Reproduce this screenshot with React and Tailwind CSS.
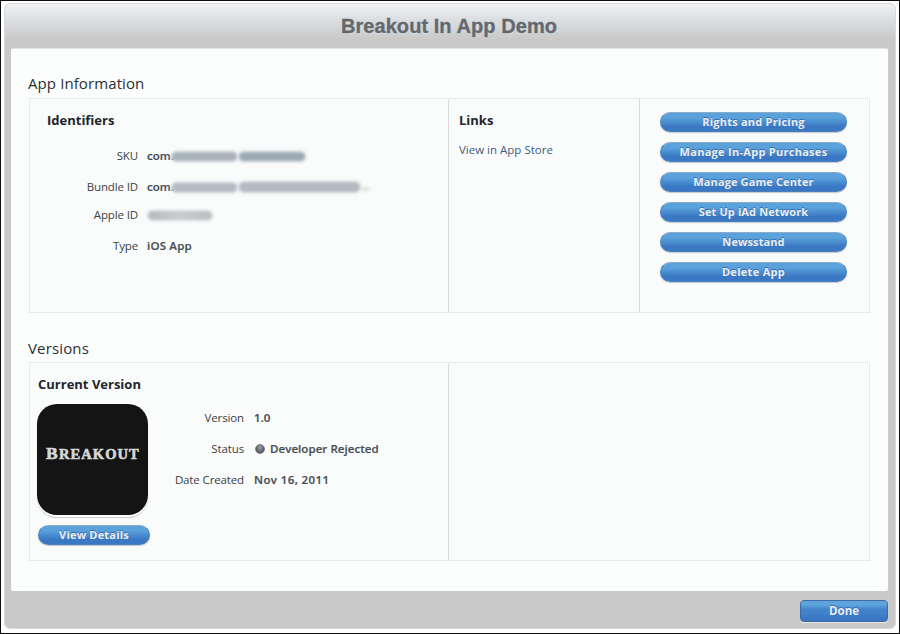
const actions = [
  ["Rights and Pricing", "tracking-[0.22px]"],
  ["Manage In-App Purchases", "tracking-[0.28px]"],
  ["Manage Game Center", "tracking-[0.12px]"],
  ["Set Up iAd Network", "tracking-[0.12px]"],
  ["Newsstand", "tracking-[0.1px]"],
  ["Delete App", "tracking-[0.3px]"],
];

function PillButton({ children, className = "" }) {
  return (
    <button
      className={`flex h-5 items-center justify-center rounded-full border border-[#4a7fbd] border-t-[#8cabc9] bg-linear-to-b from-[#5ba2dc] from-25% to-[#3a78c3] to-75% pb-px text-[11px] leading-none font-bold whitespace-nowrap text-[#e9edf1] shadow-[0_1px_1px_#c4c8cc] [text-shadow:0_-1px_0_#3a70ae] ${className}`}
    >
      {children}
    </button>
  );
}

function Smudge({ className = "" }) {
  return <span className={`block rounded-full blur-[1.5px] ${className}`} />;
}

function Field({ label, labelWidth, className = "", children }) {
  return (
    <div className={`flex items-center text-[11.5px] leading-none ${className}`}>
      <dt className={`text-right tracking-[-0.13px] whitespace-nowrap text-[#3a3f45] ${labelWidth}`}>{label}</dt>
      <dd className="flex items-center font-semibold tracking-[0.06px] whitespace-nowrap text-[#484e54] [-webkit-text-stroke:0.2px_#484e54]">{children}</dd>
    </div>
  );
}

export default function App() {
  return (
    <div className="h-[634px] w-[900px] border border-[#0c0c0c] bg-white pt-[2px] pl-[3px] font-['Open_Sans','Noto_Sans',sans-serif]">
      <div className="flex h-[626px] w-[892px] flex-col rounded-[6px] border border-[#d8d9dc] bg-[#c9c9c9] px-1.5">
        <header className="-mx-1.5 flex h-11 items-center justify-center rounded-t-[5px] bg-linear-to-b from-[#f0f2f4] via-[#dcdfe2] via-35% to-[#c9c9c9] to-80%">
          <h1 className="pr-0.5 font-['Liberation_Sans',Arial,sans-serif] text-[20px] leading-none font-bold tracking-[0.06px] text-[#62686d] [-webkit-text-stroke:0.3px_#62686d] [text-shadow:0_1px_0_#e4e7ea]">
            Breakout In App Demo
          </h1>
        </header>

        <main className="h-[543px] w-[877px] rounded-[2px] border-t border-[#e4e6e9] bg-[#fcfefe] pl-[18px]">
          <h2 className="-ml-px flex h-[49px] items-end pb-[6px] text-[15px] leading-[18px] tracking-[0.1px] text-[#2b2f34]">App Information</h2>
          <section className="flex h-[215px] w-[841px] border border-dotted border-[#d6d9dc] bg-[#fafcfc]">
            <div className="w-[419px] border-r border-[#dadcdf] pt-3">
              <h3 className="pl-[17px] text-[13px] leading-[18px] font-bold text-[#22262b]">Identifiers</h3>
              <dl className="pt-[19px]">
                <Field label="SKU" labelWidth="w-[108px]" className="h-4">
                  <span className="pl-[9px]">com.</span>
                  <Smudge className="-ml-0.5 h-[9px] w-[65px] bg-[#a9b2bb] shadow-[0_0_2px_1px_#d9dcdf]" />
                  <Smudge className="ml-0.5 h-[9px] w-[66px] bg-[#9eabb6] shadow-[0_0_2px_1px_#d9dcdf]" />
                </Field>
                <Field label="Bundle ID" labelWidth="w-[108px]" className="mt-[15px] h-4">
                  <span className="pl-[9px]">com.</span>
                  <Smudge className="-ml-0.5 h-[9px] w-[65px] bg-[#b4bac0] shadow-[0_0_2px_1px_#d9dcdf]" />
                  <Smudge className="ml-0.5 h-[10px] w-[121px] bg-[#b4bac0] shadow-[0_0_2px_1px_#d9dcdf]" />
                  <Smudge className="mt-1 h-1 w-[10px] bg-[#dfe2e5]" />
                </Field>
                <Field label="Apple ID" labelWidth="w-[108px]" className="mt-3 h-4">
                  <Smudge className="ml-[10px] h-[9px] w-[64px] bg-linear-to-r from-[#b3babf] via-[#cbcdcf] to-[#b8bdc1] shadow-[0_0_2px_1px_#dfe1e3]" />
                </Field>
                <Field label="Type" labelWidth="w-[108px]" className="mt-[15px] h-4">
                  <span className="pl-[9px] tracking-[0.2px]">iOS App</span>
                </Field>
              </dl>
            </div>
            <div className="w-[191px] border-r border-[#dadcdf] pt-3 pl-[10px]">
              <h3 className="text-[13px] leading-[18px] font-bold text-[#22262b]">Links</h3>
              <a className="mt-[13px] block text-[11.5px] leading-4 text-[#3d5a7d]">View in App Store</a>
            </div>
            <div className="flex flex-col gap-2.5 pt-[13px] pl-5">
              {actions.map(([label, tracking]) => (
                <PillButton key={label} className={`w-[187px] ${tracking}`}>{label}</PillButton>
              ))}
            </div>
          </section>

          <h2 className="-ml-px flex h-[49px] items-end pb-[5px] text-[15px] leading-[18px] tracking-[0.15px] text-[#2b2f34]">Versions</h2>
          <section className="flex h-[199px] w-[841px] border border-dotted border-[#d6d9dc] bg-[#fafcfc]">
            <div className="w-[419px] border-r border-[#dadcdf] pt-3 pl-2">
              <h3 className="text-[13px] leading-[18px] font-bold text-[#22262b]">Current Version</h3>
              <div className="flex pt-[11px]">
                <div className="w-[112px]">
                  <div className="-ml-px flex h-[111px] w-[111px] items-center justify-center rounded-[20px] bg-[#141414] pb-[12px] pl-px font-['Liberation_Serif',serif] font-bold text-[#d8d8d8] shadow-[0_2px_0_#fff,0_3px_1px_#c5c6c8]">
                    <span className="text-[14.5px] leading-[18px] tracking-[1.1px] whitespace-nowrap uppercase [-webkit-text-stroke:0.6px_#d8d8d8] first-letter:text-[17.5px]">
                      <span className="text-[17.5px] leading-none">B</span>reakout
                    </span>
                  </div>
                  <PillButton className="mt-2.5 w-[112px] tracking-[0.2px]">View Details</PillButton>
                </div>
                <dl className="pt-[6px]">
                  <Field label="Version" labelWidth="w-[94px]" className="h-4">
                    <span className="pl-[10px]">1.0</span>
                  </Field>
                  <Field label="Status" labelWidth="w-[94px]" className="mt-[15px] h-4">
                    <span className="ml-[11px] h-2.5 w-2.5 rounded-full border border-[#777c82] bg-radial-[at_50%_30%] from-[#a0a5aa] to-[#34383e]" />
                    <span className="pl-[5px]">Developer Rejected</span>
                  </Field>
                  <Field label="Date Created" labelWidth="w-[94px]" className="mt-[15px] h-4">
                    <span className="pl-[10px] tracking-[0.4px]">Nov 16, 2011</span>
                  </Field>
                </dl>
              </div>
            </div>
          </section>
        </main>

        <footer className="-mr-px flex flex-1 justify-end pt-[9px] pr-[2px]">
          <button className="flex h-[22px] w-[88px] items-center justify-center rounded-[4px] border border-[#3d6da3] bg-linear-to-b from-[#5fa4dc] from-20% via-[#4286cd] via-40% to-[#3974c0] text-[11.5px] leading-none font-bold text-[#e9edf1] shadow-[0_1px_0_#e2e4e6] [text-shadow:0_-1px_0_#3a70ae]">
            Done
          </button>
        </footer>
      </div>
    </div>
  );
}
